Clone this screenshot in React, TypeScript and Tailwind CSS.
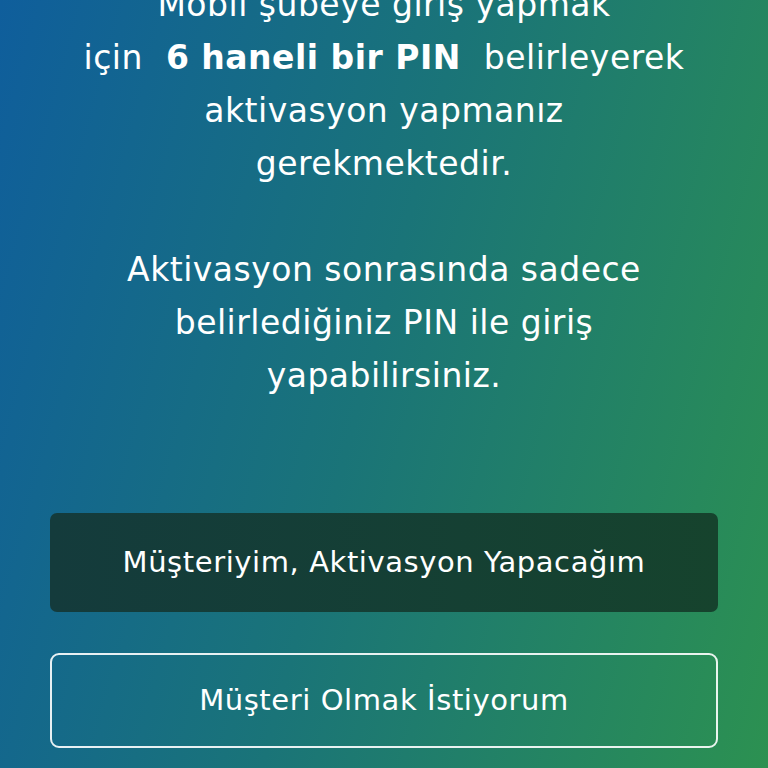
export default function App() {
    return (
        <div
            className="w-full h-[768px] overflow-hidden flex flex-col items-center bg-[linear-gradient(105deg,#0f5e9c_0%,#1a7478_48%,#2c9151_100%)] text-white"
            style={{fontFamily: '"DejaVu Sans", Inter, sans-serif'}}
        >
            {/* Info text */}
            <div className="-mt-[22px] px-[30px] text-center text-[33px] tracking-[0.015em] leading-[53px] font-normal whitespace-nowrap">
                <p>Mobil şubeye giriş yapmak</p>
                <p>
                    için <span className="font-semibold">&nbsp;6 haneli bir PIN&nbsp;</span> belirleyerek
                </p>
                <p>aktivasyon yapmanız</p>
                <p>gerekmektedir.</p>
                <p>&nbsp;</p>
                <p>Aktivasyon sonrasında sadece</p>
                <p>belirlediğiniz PIN ile giriş</p>
                <p>yapabilirsiniz.</p>
            </div>

            {/* Buttons */}
            <div className="w-full px-[50px] mt-[111px] flex flex-col gap-[41px]">
                <button
                    className="h-[99px] w-full rounded-[7px] bg-gradient-to-r from-[#143b3c] to-[#16432d] text-[29px] tracking-[0.02em] font-medium text-white">
                    Müşteriyim, Aktivasyon Yapacağım
                </button>
                <button
                    className="h-[95px] w-full rounded-[9px] border-2 border-white/90 bg-transparent text-[29px] tracking-[0.02em] font-medium text-white">
                    Müşteri Olmak İstiyorum
                </button>
            </div>
        </div>
    );
}
